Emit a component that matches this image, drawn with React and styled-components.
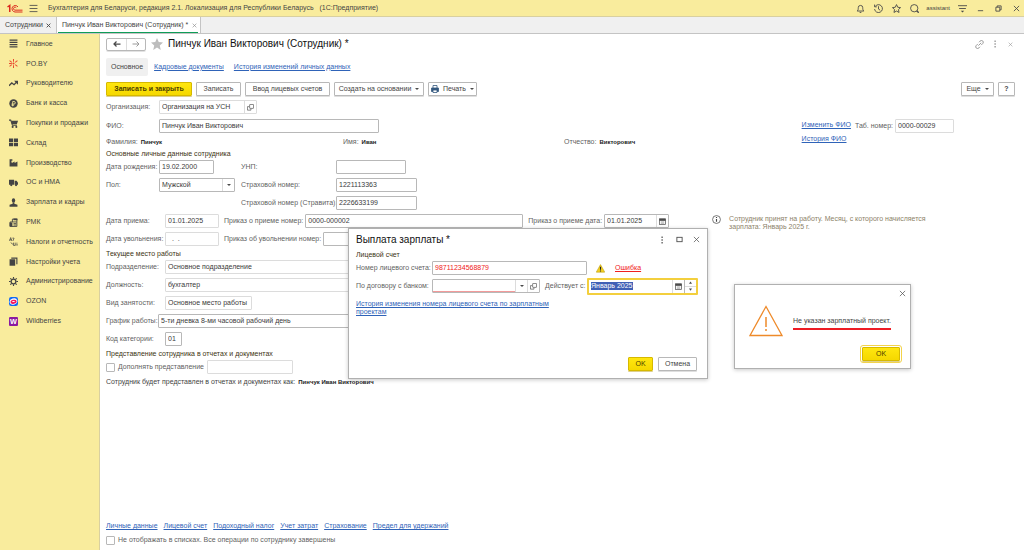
import React, { useEffect, useRef } from "react";
import styled, { createGlobalStyle, css } from "styled-components";

const line = "#b8b8b8";
const softLine = "#dcdcdc";
const linkColor = "#2f63b8";

const GlobalStyle = createGlobalStyle`
  * { box-sizing: border-box; }
  body {
    margin: 0;
    background: #fff;
    color: #444;
    font: 7px/8px "Liberation Sans", Arial, sans-serif;
  }
  button, input { font: inherit; color: inherit; }
  h1, h2, h3, p, ul { margin: 0; padding: 0; font: inherit; }
`;

const Shell = styled.div`
  position: relative;
  display: flex;
  flex-direction: column;
  min-height: 100vh;
`;

const TitleBar = styled.header`
  display: flex;
  align-items: center;
  height: 17px;
  padding: 0 2px 0 7px;
  background: #f9ec9d;
  border-bottom: 1px solid #d9d0a0;
`;

const AppTitle = styled.span`
  margin-left: 5px;
  flex: 1;
  white-space: pre;
`;

const IconButton = styled.button`
  display: grid;
  place-items: center;
  width: ${(p) => p.$w || 12}px;
  height: 12px;
  padding: 0;
  border: 0;
  background: none;
  color: ${(p) => p.$color || "#4a4a4a"};
`;

const TopTools = styled.div`
  display: flex;
  align-items: center;
  gap: 6px;
`;

const UserName = styled.span`
  font-size: 6px;
`;

const TabStrip = styled.nav`
  display: flex;
  height: 17px;
  background: #f0f0f0;
  border-bottom: 1px solid #c4c4c4;
`;

const Tab = styled.div`
  display: flex;
  align-items: center;
  gap: 3px;
  padding: ${(p) => (p.$active ? "0 2px 0 1px" : "0 4px 0 5px")};
  border-right: 1px solid #c4c4c4;
  background: ${(p) => (p.$active ? "#fff" : "none")};
  white-space: nowrap;
`;

const TabLabel = styled.span`
  display: flex;
  align-items: center;
  gap: 3px;
  ${(p) =>
    p.$active &&
    css`
      height: 15px;
      padding: 1px 1px 0 4px;
      border-bottom: 1px solid #0f9d58;
    `}
`;

const Body = styled.div`
  display: flex;
  flex: 1;
`;

const Sidebar = styled.nav`
  flex: none;
  width: 100px;
  background: #f9ec9d;
  border-right: 1px solid #d9d0a0;
`;

const Menu = styled.ul`
  display: grid;
  grid-template-rows: repeat(15, 1fr);
  height: 297px;
  list-style: none;
`;

const MenuItem = styled.a`
  display: flex;
  align-items: center;
  gap: 8px;
  height: 100%;
  padding-left: 9px;
  color: inherit;
  text-decoration: none;
  white-space: nowrap;
`;

const Main = styled.main`
  flex: 1;
  min-width: 0;
  display: flex;
  flex-direction: column;
  padding: 0 9px 3px 6px;
`;

const TitleRow = styled.div`
  display: flex;
  align-items: center;
  height: 20px;
  gap: 5px;
`;

const History = styled.div`
  display: flex;
  height: 13px;
  border: 1px solid ${line};
  border-radius: 2px;
  box-shadow: 0 1px #e2e2e2;
`;

const HistoryButton = styled(IconButton)`
  width: 19px;
  height: 11px;
  & + & { border-left: 1px solid ${softLine}; }
`;

const Heading = styled.h1`
  flex: 1;
  font-size: 10px;
  line-height: 12px;
  color: #111;
`;

const Sections = styled.nav`
  display: flex;
  align-items: center;
  gap: 10px;
  height: 25px;
`;

const CurrentSection = styled.span`
  padding: 5px;
  margin-right: -4px;
  background: #f0f0f0;
  border-radius: 2px;
`;

const Link = styled.a`
  color: ${(p) => p.$color || linkColor};
  text-decoration: underline;
  text-underline-offset: 1px;
  white-space: ${(p) => (p.$wrap ? "normal" : "nowrap")};
`;

const LinkNote = styled.p`
  width: 200px;
  margin-top: 4px;
`;

const Toolbar = styled.div`
  display: flex;
  align-items: center;
  gap: 4px;
  height: 19px;
`;

const Button = styled.button`
  display: flex;
  align-items: center;
  justify-content: center;
  gap: 4px;
  width: ${(p) => (p.$w ? p.$w + "px" : "auto")};
  height: 14px;
  padding: 0;
  border: 1px solid ${line};
  border-radius: 1px;
  background: #fff;
  box-shadow: 0 1px #dedede;
  white-space: nowrap;
  ${(p) =>
    p.$primary &&
    css`
      background: linear-gradient(#ffe60f, #f5d800);
      border-color: #d6b900;
      box-shadow: 0 1px #ddcf8c;
      color: #4a3d00;
    `}
  ${(p) => p.$bold && "font-weight: bold;"}
  ${(p) => p.$focused && "outline: 1px solid #f3d34a; outline-offset: 1px;"}
`;

const Spacer = styled.div`
  flex: 1;
`;

const Caret = styled.span`
  width: 0;
  border: 2px solid transparent;
  border-top-color: #4a4a4a;
  border-bottom: 0;
`;

const Row = styled.div`
  display: flex;
  align-items: center;
  height: ${(p) => p.$h || 18}px;
  gap: ${(p) => p.$gap || 0}px;
  margin-left: ${(p) => p.$indent || 0}px;
`;

const Label = styled.label`
  flex: none;
  width: ${(p) => (p.$w ? p.$w + "px" : "auto")};
  color: #5f5f5f;
  white-space: nowrap;
`;

const FieldBox = styled.div`
  display: flex;
  flex: none;
  width: ${(p) => p.$w}px;
  height: ${(p) => (p.$focused ? 17 : 14)}px;
  border: 1px solid ${(p) => (p.$soft ? softLine : line)};
  border-radius: 1px;
  background: #fff;
  ${(p) => p.$focused && "border: 2px solid #f3cf3d;"}
`;

const FieldInput = styled.input`
  flex: 1;
  min-width: 0;
  width: 100%;
  padding: 0 2px;
  border: 0;
  outline: 0;
  background: none;
  color: ${(p) => p.$color || "#3a3a3a"};
  ${(p) => p.$required && "box-shadow: inset 0 -1px #f29a9a;"}
  &::selection { background: #3f60b5; color: #fff; }
`;

const FieldButton = styled(IconButton)`
  height: 100%;
  border-left: 1px solid ${softLine};
`;

const Stepper = styled.div`
  display: grid;
  grid-template-rows: 1fr 1fr;
  width: 12px;
  border-left: 1px solid ${line};
  button { height: auto; width: 100%; }
  button + button { border-top: 1px solid ${softLine}; }
`;

const GroupTitle = styled.h3`
  display: flex;
  align-items: ${(p) => (p.$centered ? "center" : "flex-end")};
  height: 10px;
  color: #3d3312;
`;

const Upper = styled.div`
  display: flex;
  align-items: flex-start;
`;

const UpperForm = styled.div`
  flex: 1;
`;

const NameRow = styled.div`
  display: grid;
  grid-template-columns: 237px 221px 1fr;
  align-items: center;
  height: 12px;
  color: #5f5f5f;
`;

const Strong = styled.strong`
  margin-left: 3px;
  font-size: 6px;
  color: #222;
`;

const NumberPanel = styled.aside`
  display: flex;
  gap: 4px;
  margin: 20px 61px 0 0;
`;

const LinkStack = styled.div`
  display: flex;
  flex-direction: column;
  gap: 6px;
  padding-top: 3px;
`;

const PersonalGrid = styled.div`
  display: grid;
  grid-template-columns: 53px 82px 95px auto;
  grid-auto-rows: 18px;
  align-items: center;
`;

const Dates = styled.div`
  display: flex;
`;

const Hint = styled.div`
  display: flex;
  gap: 8px;
  width: 220px;
  margin-left: 43px;
  padding-top: 3px;
  color: #8c8268;
`;

const Check = styled.input`
  appearance: none;
  flex: none;
  width: 9px;
  height: 9px;
  margin: 0 3px 0 0;
  border: 1px solid ${line};
  border-radius: 1px;
  background: #fff;
`;

const Window = styled.section`
  position: absolute;
  display: flex;
  flex-direction: column;
  background: #fff;
  border: 1px solid #b0b0b0;
  box-shadow: 0 1px 4px rgba(0, 0, 0, 0.22);
`;

const PayWindow = styled(Window)`
  left: 348px;
  top: 228px;
  width: 360px;
  height: 151px;
  padding: 0 10px 7px 7px;
`;

const MessageWindow = styled(Window)`
  left: 734px;
  top: 284px;
  width: 177px;
  height: 85px;
  padding: 2px 10px 7px 14px;
`;

const WindowHead = styled.div`
  display: flex;
  align-items: center;
  gap: 5px;
  height: 21px;
  margin-right: -5px;
  h2 { flex: 1; font-size: 10px; line-height: 12px; color: #111; }
`;

const Actions = styled.div`
  display: flex;
  justify-content: flex-end;
  gap: 5px;
  margin-top: auto;
`;

const MessageBody = styled.div`
  display: flex;
  align-items: center;
  gap: 10px;
  padding-top: 6px;
`;

const MessageText = styled.p`
  padding: 4px 0 3px;
  border-bottom: 2px solid #ed1c24;
  white-space: nowrap;
`;

const CloseRow = styled.div`
  display: flex;
  justify-content: flex-end;
  margin-right: -8px;
`;

const BottomLinks = styled(Row)`
  margin-top: auto;
`;

const Icon = styled.svg`
  flex: none;
`;

const Svg = ({ s = 9, sw = 1.6, children }) => (
  <Icon width={s} height={s} viewBox="0 0 16 16" fill="none" stroke="currentColor" strokeWidth={sw} aria-hidden="true">
    {children}
  </Icon>
);

const solid = { fill: "currentColor", stroke: "none" };

const Cross = ({ s = 7, sw = 2 }) => (
  <Svg s={s} sw={sw}><path d="M2 2 14 14M14 2 2 14" /></Svg>
);
const Dots = () => (
  <Svg s={8}><g {...solid}><rect x="7" y="1" width="2.4" height="3" /><rect x="7" y="6.5" width="2.4" height="3" /><rect x="7" y="12" width="2.4" height="3" /></g></Svg>
);
const Calendar = () => (
  <Svg s={7}><rect x="1" y="2" width="14" height="13" /><path d="M1 4h14" strokeWidth="5" /><path d="M4 9h8M4 12h8" strokeWidth="1" /></Svg>
);
const OpenIcon = () => (
  <Svg s={7} sw={1.5}><rect x="6" y="1" width="9" height="9" rx="1" /><path d="M5 6H1v8h8v-3" /></Svg>
);

const menu = [
  ["Главное", <path d="M1 2h14M1 6h14M1 10h14M1 14h14" strokeWidth="2" />],
  ["PO.BY", <g stroke="#e8492f" strokeWidth="1.8"><path d="M8 0v5M8 11v5M1 3l4 3M11 10l4 3M15 3l-4 3M5 10l-4 3M0 8h5" /><circle cx="8" cy="8" r="1" /></g>],
  ["Руководителю", <g><path d="M0 12 5 7l4 3 5-5" strokeWidth="2.2" /><path {...solid} d="M9 3h7v7z" /></g>],
  ["Банк и касса", <g><circle cx="8" cy="8" r="7.5" {...solid} /><path d="M6.5 13V4.5H9a2.2 2.2 0 0 1 0 4.5H4.5M4.5 11H9" stroke="#f9ec9d" strokeWidth="1.5" /></g>],
  ["Покупки и продажи", <g><path d="M0 2h3l3 9h8" strokeWidth="1.8" /><path {...solid} d="M3.5 3H16l-2 6.5H5.5z" /><circle cx="6.5" cy="14" r="1.8" {...solid} /><circle cx="13" cy="14" r="1.8" {...solid} /></g>],
  ["Склад", <path {...solid} d="M0 1h7.3v6H0zM8.7 1H16v6H8.7zM0 8.500h7.300v6H0zM8.700 8.500H16v6H8.700z" />],
  ["Производство", <path {...solid} d="M1 15V2h5v3H4l1 4 5-3v3l5-3v9z" />],
  ["ОС и НМА", <g><path {...solid} d="M0 3h9v9H0zM10 5h3.500L16 8.500V12h-6z" /><circle cx="4" cy="12.500" r="2" {...solid} /><circle cx="12.500" cy="12.500" r="2" {...solid} /></g>],
  ["Зарплата и кадры", <g {...solid}><ellipse cx="8" cy="4.500" rx="3" ry="4" /><path d="M6.500 8h3v2l5.500 2v3.500H1V12l5.500-2z" /></g>],
  ["РМК", <g><path d="M2 7h12v8H2zM6 7V2h8v5" /><path {...solid} d="M1 8h5v7H1zM8 1h7v3H8z" /><path d="M8 10h5M8 12.500h5" /></g>],
  ["Налоги и отчетность", <g strokeWidth="1.3"><path d="M1 7 3 1l2 6M1 5h4M6 2h3l-2 5M3 10l4 3M8 10v5h3v-5M12 14h4M13 11h2" /></g>],
  ["Настройки учета", <g><path {...solid} d="M1 4h10v11.500H1z" /><path d="M4 2h10v11" strokeWidth="2" /></g>],
  ["Администрирование", <g><circle cx="8" cy="8" r="4.200" strokeWidth="2.200" /><path d="M8 0v3M8 13v3M0 8h3M13 8h3M2.300 2.300l2 2M11.700 11.700l2 2M13.700 2.300l-2 2M4.300 11.700l-2 2" strokeWidth="2" /></g>],
  ["OZON", <g stroke="none"><rect width="16" height="16" rx="4" fill="#1268f5" /><ellipse cx="8" cy="8" rx="7" ry="5.500" fill="#fff" transform="rotate(-20 8 8)" /><ellipse cx="8" cy="8.500" rx="5.500" ry="3.500" fill="#f7195f" transform="rotate(-15 8 8)" /><ellipse cx="8" cy="8" rx="2.500" ry="1" fill="#fff" /></g>, 10],
  ["Wildberries", <g stroke="none"><rect width="16" height="16" rx="2" fill="#8a1aa0" /><text x="8" y="12.500" textAnchor="middle" fontSize="13" fontWeight="bold" fill="#fff">W</text></g>, 10],
];

function Field({ id, w, value = "", soft, color, required, label, inputRef, focused, children }) {
  return (
    <FieldBox $w={w} $soft={soft} $focused={focused}>
      <FieldInput id={id} ref={inputRef} defaultValue={value} aria-label={label} $color={color} $required={required} />
      {children}
    </FieldBox>
  );
}

function Labeled({ id, text, lw, ...rest }) {
  return (
    <>
      <Label htmlFor={id} $w={lw}>{text}</Label>
      <Field id={id} {...rest} />
    </>
  );
}

function Header() {
  return (
    <TitleBar>
      <svg width="16" height="9" viewBox="0 0 32 18" fill="none" stroke="#dc2a1e" strokeWidth="2" aria-label="1C">
        <path d="M1 6 5.500 3V16" strokeWidth="3" />
        <path d="M22 6a6.500 6.500 0 1 0-6 10h15" />
        <path d="M18.500 7.500a3 3 0 1 0-2.500 4.800h15" />
      </svg>
      <IconButton $w={20} aria-label="Меню"><Svg s={9} sw={1.5}><path d="M1 2.500h14M1 8h14M1 13.500h14" /></Svg></IconButton>
      <AppTitle>{"Бухгалтерия для Беларуси, редакция 2.1. Локализация для Республики Беларусь   (1С:Предприятие)"}</AppTitle>
      <TopTools>
        <IconButton aria-label="Уведомления"><Svg><path d="M2 12.500c2-2 2-3 2-6a4 4 0 0 1 8 0c0 3 0 4 2 6zM6.500 15h3" /></Svg></IconButton>
        <IconButton aria-label="История"><Svg><path d="M2 4.500A7 7 0 1 1 1 9M1 1v4h4M8 4v5l3 2" /></Svg></IconButton>
        <IconButton aria-label="Избранное"><Svg><path d="m8 1 2.200 4.800 5 .6-3.700 3.500 1 5.100L8 12.500 3.500 15l1-5.100L.8 6.400l5-.6z" /></Svg></IconButton>
        <IconButton aria-label="Поиск"><Svg><circle cx="7.500" cy="7.500" r="6.500" /><path d="m12 12 3.500 3.500" strokeWidth="2.500" /></Svg></IconButton>
        <UserName>assistant</UserName>
        <IconButton aria-label="Настройки"><Svg><path d="M0 3h16M2 8h12" /><path {...solid} d="M5 12h6l-3 3z" /></Svg></IconButton>
        <IconButton aria-label="Свернуть"><Svg s={7}><path d="M2 13h12" strokeWidth="2" /></Svg></IconButton>
        <IconButton aria-label="Развернуть"><Svg s={7} sw={2}><path d="M2 5h9v9H2zM5 5V2h9v9h-3" /></Svg></IconButton>
        <IconButton aria-label="Закрыть"><Cross /></IconButton>
      </TopTools>
    </TitleBar>
  );
}

export default function App() {
  const period = useRef(null);
  useEffect(() => {
    period.current.focus();
    period.current.select();
  }, []);

  return (
    <Shell>
      <GlobalStyle />
      <Header />
      <TabStrip>
        <Tab><TabLabel>Сотрудники</TabLabel><IconButton $w={6} aria-label="Закрыть"><Cross s={5} sw={3} /></IconButton></Tab>
        <Tab $active><TabLabel $active>Пинчук Иван Викторович (Сотрудник) *<IconButton $w={6} $color="#8a8a8a" aria-label="Закрыть"><Cross s={5} /></IconButton></TabLabel></Tab>
      </TabStrip>
      <Body>
        <Sidebar>
          <Menu>
            {menu.map(([name, icon]) => (
              <li key={name}><MenuItem href="#"><Svg s={9}>{icon}</Svg>{name}</MenuItem></li>
            ))}
          </Menu>
        </Sidebar>
        <Main>
          <TitleRow>
            <History>
              <HistoryButton aria-label="Назад"><Svg s={8} sw={2.5}><path d="M15 8H2M7 3 2 8l5 5" /></Svg></HistoryButton>
              <HistoryButton aria-label="Вперед" $color="#9a9a9a"><Svg s={8} sw={2}><path d="M1 8h13M9 3l5 5-5 5" /></Svg></HistoryButton>
            </History>
            <IconButton $color="#bdbdbd" aria-label="В избранное"><Svg s={12}><path {...solid} d="m8 0 2.300 5.400 5.700.6-4.300 3.900L13 16l-5-3.200L3 16l1.300-6.100L0 6l5.700-.6z" /></Svg></IconButton>
            <Heading>Пинчук Иван Викторович (Сотрудник) *</Heading>
            <IconButton $color="#8a8a8a" aria-label="Ссылка"><Svg s={9} sw={1.5}><path d="m6 10 5-5M7 4l2-2a3 3 0 0 1 5 4l-3 3M9 12l-2 2a3 3 0 0 1-5-4l3-3" /></Svg></IconButton>
            <IconButton $w={10} $color="#8a8a8a" aria-label="Еще"><Dots /></IconButton>
            <IconButton $w={10} $color="#9a9a9a" aria-label="Закрыть"><Cross s={5} /></IconButton>
          </TitleRow>
          <Sections>
            <CurrentSection>Основное</CurrentSection>
            <Link href="#">Кадровые документы</Link>
            <Link href="#">История изменений личных данных</Link>
          </Sections>
          <Toolbar>
            <Button $primary $bold $w={86}>Записать и закрыть</Button>
            <Button $w={45}>Записать</Button>
            <Button $w={85}>Ввод лицевых счетов</Button>
            <Button $w={90}>Создать на основании <Caret /></Button>
            <Button $w={49}>
              <Svg s={8}><g stroke="#35597f"><path d="M4 6V1h8v5" /><path d="M1 6h14v7H1z" fill="#35597f" /><path d="M4 10h8v5H4z" fill="#fff" /></g></Svg>
              Печать <Caret />
            </Button>
            <Spacer />
            <Button $w={33}>Еще <Caret /></Button>
            <Button $w={17} $bold>?</Button>
          </Toolbar>
          <Upper>
            <UpperForm>
              <Row>
                <Labeled id="org" text="Организация:" lw={53} w={98} soft value="Организация на УСН">
                  <FieldButton aria-label="Открыть"><OpenIcon /></FieldButton>
                </Labeled>
              </Row>
              <Row $h={20}><Labeled id="fio" text="ФИО:" lw={53} w={220} value="Пинчук Иван Викторович" /></Row>
              <NameRow>
                <span>Фамилия:<Strong>Пинчук</Strong></span>
                <span>Имя:<Strong>Иван</Strong></span>
                <span>Отчество:<Strong>Викторович</Strong></span>
              </NameRow>
            </UpperForm>
            <NumberPanel>
              <LinkStack>
                <Link href="#">Изменить ФИО</Link>
                <Link href="#">История ФИО</Link>
              </LinkStack>
              <Row $h={16} $gap={2}><Labeled id="tab" text="Таб. номер:" w={59} soft value="0000-00029" /></Row>
            </NumberPanel>
          </Upper>
          <GroupTitle>Основные личные данные сотрудника</GroupTitle>
          <PersonalGrid>
            <Labeled id="birth" text="Дата рождения:" w={55} value="19.02.2000" />
            <Labeled id="unp" text="УНП:" w={70} />
            <Labeled id="sex" text="Пол:" w={76} value="Мужской">
              <FieldButton aria-label="Выбрать"><Caret /></FieldButton>
            </Labeled>
            <Labeled id="ins" text="Страховой номер:" w={81} value="1221113363" />
            <span /><span />
            <Labeled id="ins2" text="Страховой номер (Стравита):" w={81} value="2226633199" />
          </PersonalGrid>
          <Dates>
            <div>
              <Row>
                <Labeled id="hired" text="Дата приема:" lw={59} w={54} soft value="01.01.2025" />
                <Row $gap={2} $indent={5}>
                  <Labeled id="order" text="Приказ о приеме номер:" w={218} value="0000-000002" />
                </Row>
                <Row $gap={2} $indent={5}>
                  <Labeled id="orderDate" text="Приказ о приеме дата:" w={65} value="01.01.2025">
                    <FieldButton aria-label="Календарь"><Calendar /></FieldButton>
                  </Labeled>
                </Row>
              </Row>
              <Row>
                <Labeled id="fired" text="Дата увольнения:" lw={59} w={54} soft value="  .  ." />
                <Row $gap={2} $indent={5}>
                  <Labeled id="fireOrder" text="Приказ об увольнении номер:" w={200} />
                </Row>
              </Row>
            </div>
            <Hint>
              <Svg s={9} sw={1.4}><circle cx="8" cy="8" r="7" stroke="#555" /><path d="M8 7v5M8 3.500v2" stroke="#444" strokeWidth="2" /></Svg>
              <p>Сотрудник принят на работу. Месяц, с которого начисляется зарплата: Январь 2025 г.</p>
            </Hint>
          </Dates>
          <GroupTitle>Текущее место работы</GroupTitle>
          <Row><Labeled id="dep" text="Подразделение:" lw={59} w={359} soft value="Основное подразделение" /></Row>
          <Row><Labeled id="post" text="Должность:" lw={59} w={359} soft value="бухгалтер" /></Row>
          <Row><Labeled id="kind" text="Вид занятости:" lw={59} w={87} soft value="Основное место работы" /></Row>
          <Row><Labeled id="plan" text="График работы:" lw={52} w={366} value="5-ти дневка 8-ми часовой рабочий день" /></Row>
          <Row><Labeled id="cat" text="Код категории:" lw={59} w={17} value="01" /></Row>
          <GroupTitle>Представление сотрудника в отчетах и документах</GroupTitle>
          <Row>
            <Check type="checkbox" id="extra" />
            <Label htmlFor="extra" $w={89}>Дополнять представление</Label>
            <Field w={86} soft label="Представление" />
          </Row>
          <Row $h={12}>Сотрудник будет представлен в отчетах и документах как:<Strong>Пинчук Иван Викторович</Strong></Row>
          <BottomLinks $h={14} $gap={6}>
            {["Личные данные", "Лицевой счет", "Подоходный налог", "Учет затрат", "Страхование", "Предел для удержаний"].map((t) => (
              <Link key={t} href="#">{t}</Link>
            ))}
          </BottomLinks>
          <Row $h={14}>
            <Check type="checkbox" id="hide" />
            <Label htmlFor="hide">Не отображать в списках. Все операции по сотруднику завершены</Label>
          </Row>
        </Main>
      </Body>

      <PayWindow role="dialog" aria-label="Выплата зарплаты">
        <WindowHead>
          <h2>Выплата зарплаты *</h2>
          <IconButton aria-label="Еще"><Dots /></IconButton>
          <IconButton aria-label="Развернуть"><Svg s={7} sw={2}><rect x="2" y="3" width="12" height="10" /></Svg></IconButton>
          <IconButton aria-label="Закрыть"><Cross s={7} sw={1.6} /></IconButton>
        </WindowHead>
        <GroupTitle $centered>Лицевой счет</GroupTitle>
        <Row $h={16}>
          <Labeled id="account" text="Номер лицевого счета:" lw={76} w={155} value="98711234568879" color="#f02020" />
          <Row $gap={10} $indent={9}>
            <Svg s={9}><path d="M8 1 15.500 14.500H.5z" fill="#f7d21e" stroke="#b79a10" strokeWidth="1" /><path d="M8 5v5M8 11.500v2" stroke="#222" strokeWidth="2" /></Svg>
            <Link href="#" $color="#f02020">Ошибка</Link>
          </Row>
        </Row>
        <Row $h={20}>
          <Labeled id="contract" text="По договору с банком:" lw={76} w={108} required>
            <FieldButton aria-label="Выбрать"><Caret /></FieldButton>
            <FieldButton aria-label="Открыть"><OpenIcon /></FieldButton>
          </Labeled>
          <Row $indent={5}>
            <Labeled id="period" text="Действует с:" lw={42} w={111} value="Январь 2025" focused inputRef={period}>
              <FieldButton aria-label="Календарь"><Calendar /></FieldButton>
              <Stepper>
                <IconButton aria-label="Больше"><Svg s={3}><path {...solid} d="M8 2l8 12H0z" /></Svg></IconButton>
                <IconButton aria-label="Меньше"><Svg s={3}><path {...solid} d="M8 14l8-12H0z" /></Svg></IconButton>
              </Stepper>
            </Labeled>
          </Row>
        </Row>
        <LinkNote><Link href="#" $wrap>История изменения номера лицевого счета по зарплатным проектам</Link></LinkNote>
        <Actions>
          <Button $primary $w={25}>OK</Button>
          <Button $w={39}>Отмена</Button>
        </Actions>
      </PayWindow>

      <MessageWindow role="alertdialog" aria-label="Сообщение">
        <CloseRow><IconButton aria-label="Закрыть"><Cross s={7} sw={1.6} /></IconButton></CloseRow>
        <MessageBody>
          <svg width="34" height="32" viewBox="0 0 34 32" fill="none" stroke="#ee8a2a" aria-hidden="true">
            <path d="M17 1.500 33 30.500H1z" strokeWidth="1.300" /><path d="M17 12v10M17 24v2" strokeWidth="1.500" />
          </svg>
          <MessageText>Не указан зарплатный проект.</MessageText>
        </MessageBody>
        <Actions><Button $primary $focused $w={38}>OK</Button></Actions>
      </MessageWindow>
    </Shell>
  );
}
